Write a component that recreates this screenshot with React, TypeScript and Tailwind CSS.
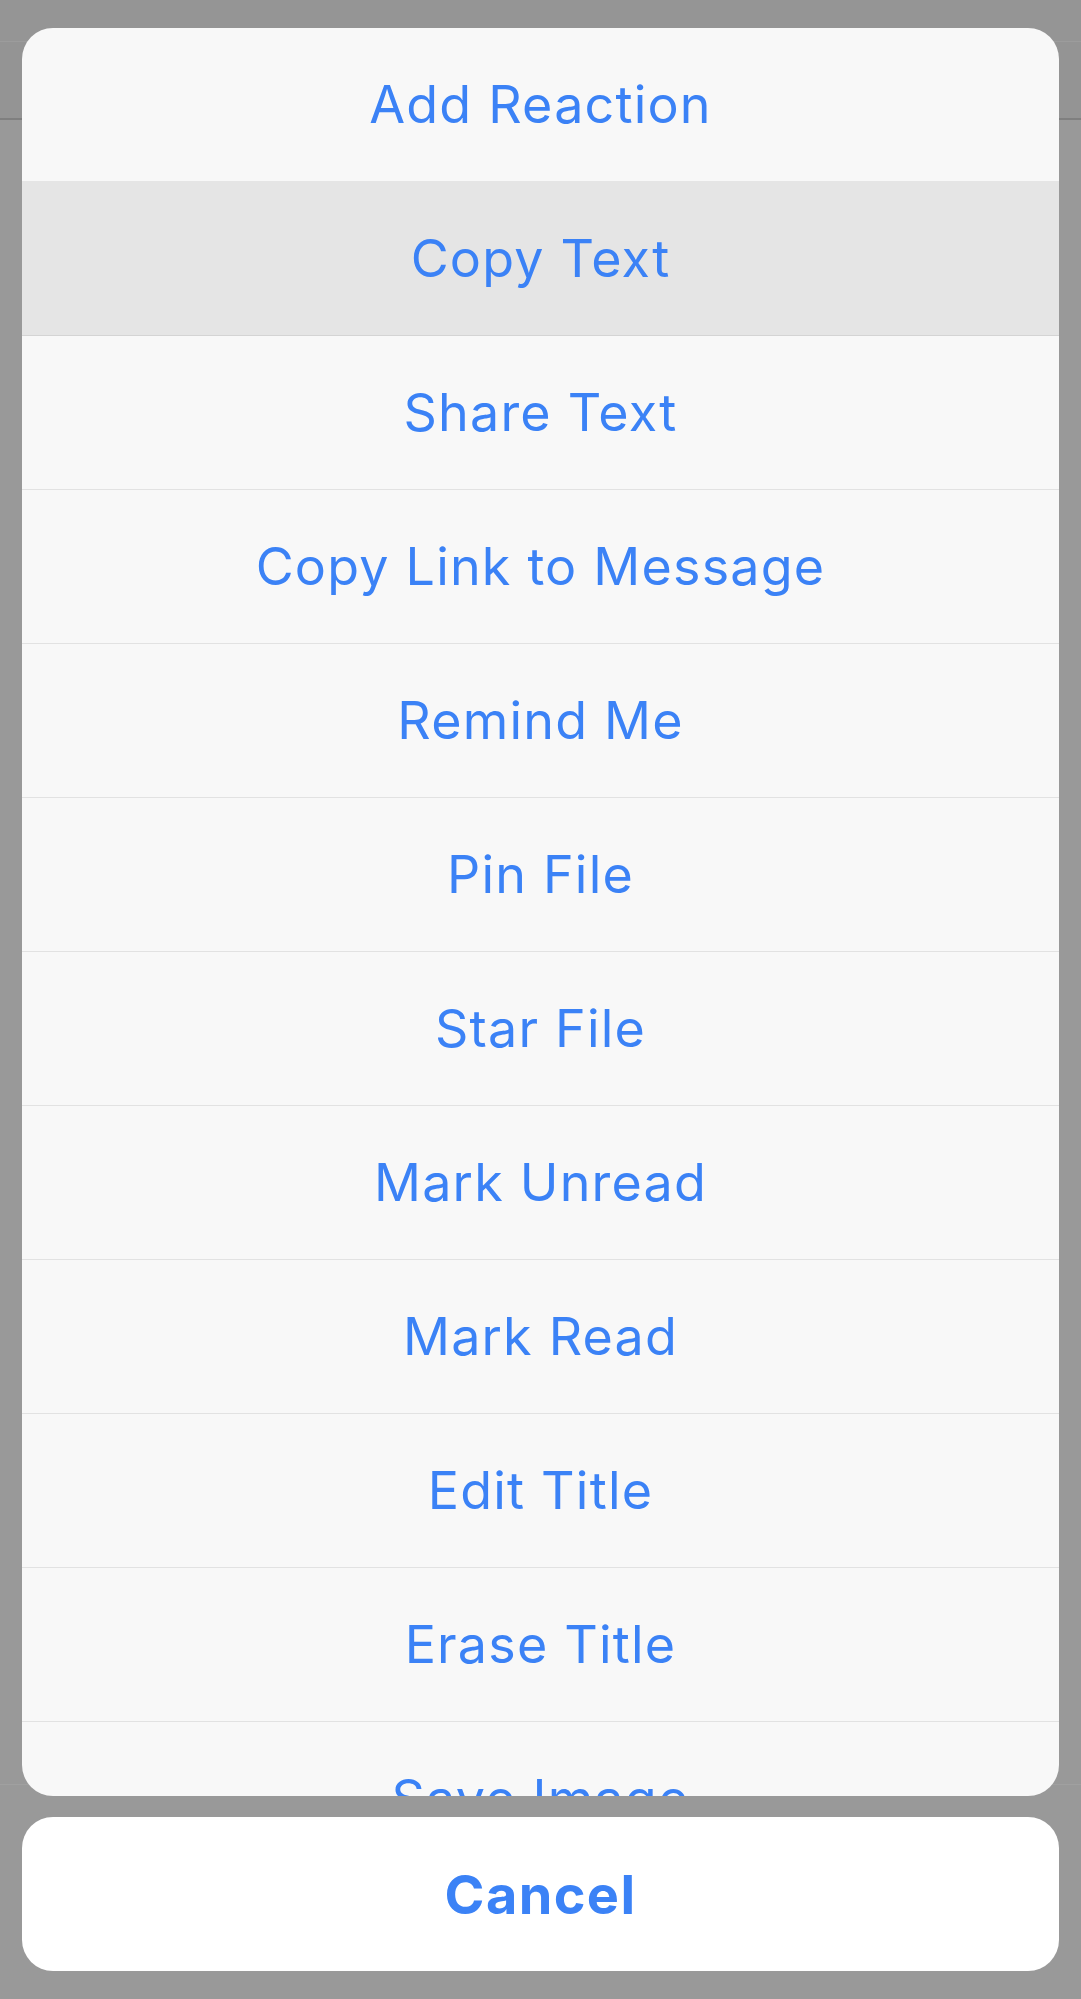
import React from "react";

const items = [
  "Add Reaction",
  "Copy Text",
  "Share Text",
  "Copy Link to Message",
  "Remind Me",
  "Pin File",
  "Star File",
  "Mark Unread",
  "Mark Read",
  "Edit Title",
  "Erase Title",
  "Save Image",
];

export default function App() {
  return (
    <div
      className="relative w-[1081px] h-[1999px] overflow-hidden bg-[#999999]"
      style={{ fontFamily: 'Inter, "Noto Sans", "Liberation Sans", sans-serif' }}
    >
      {/* dimmed app behind */}
      <div className="flex flex-col">
        <div className="h-[41px] bg-[#959595]" />
        <div className="h-px bg-[#9c9c9c]" />
        <div className="h-[76px] bg-[#949494]" />
        <div className="h-[2px] bg-[#7f7f7f]" />
        <div className="h-[1664px]" />
        <div className="h-px bg-[#a0a0a0]" />
      </div>

      {/* action sheet */}
      <div className="absolute left-[22px] top-[28px] w-[1037px] flex flex-col">
        <div className="h-[1768px] rounded-[31px] bg-[#f8f8f8] overflow-hidden flex flex-col">
          {items.map((label, i) => (
            <div
              key={label}
              className={
                "shrink-0 h-[154px] flex items-center justify-center border-b text-[52px] text-[#3b82f6] tracking-[1.2px] " +
                (i === 1
                  ? "bg-[#e5e5e5] border-[#d4d4d4]"
                  : i === 0
                  ? "border-[#e5e5e5]"
                  : "border-[#e2e2e2]")
              }
            >
              <span>{label}</span>
            </div>
          ))}
        </div>
        <div className="mt-[21px] h-[154px] rounded-[31px] bg-white flex items-center justify-center text-[54px] font-bold tracking-[1.4px] text-[#3b82f6]">
          Cancel
        </div>
      </div>
    </div>
  );
}
